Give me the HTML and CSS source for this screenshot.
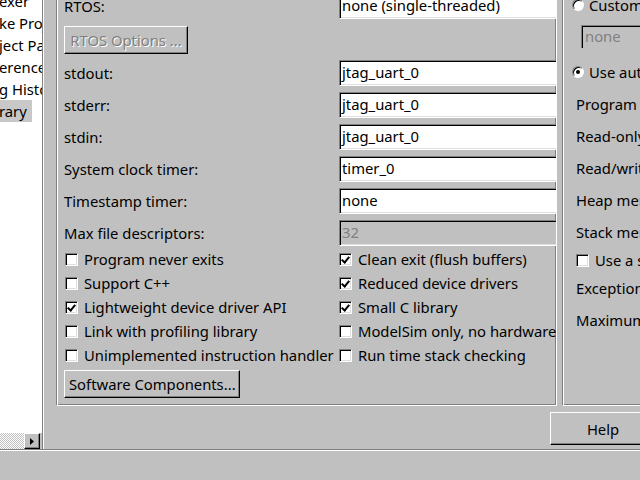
FILE: index.html
```html
<html><head>
<title>System Library Properties</title>
<link rel="stylesheet" href="styles.css">
</head>
<body>
<div class="window">
  <div class="workspace">
    <div class="tree">
      <ul class="tree-list">
        <li>exer</li>
        <li>ke Project</li>
        <li>ject Paths</li>
        <li>erences</li>
        <li>g History</li>
        <li class="selected">rary</li>
      </ul>
      <div class="hscroll">
        <div class="track"></div>
        <div class="arrow-btn">
          <svg width="4" height="7" viewBox="0 0 4 7"><path d="M0 0 L4 3.5 L0 7 Z" fill="#000"/></svg>
        </div>
      </div>
    </div>

    <div class="pages">
      <div class="panels">
        <div class="panel main">
          <div class="form">
            <label>RTOS:</label>
            <div class="field">none (single-threaded)</div>

            <button class="btn options" disabled>RTOS Options ...</button>
            <div></div>

            <label>stdout:</label>
            <div class="field">jtag_uart_0</div>

            <label>stderr:</label>
            <div class="field">jtag_uart_0</div>

            <label>stdin:</label>
            <div class="field">jtag_uart_0</div>

            <label>System clock timer:</label>
            <div class="field">timer_0</div>

            <label>Timestamp timer:</label>
            <div class="field">none</div>

            <label>Max file descriptors:</label>
            <div class="field disabled">32</div>
          </div>

          <div class="checks">
            <div class="check"><span class="box"></span>Program never exits</div>
            <div class="check"><span class="box checked"></span>Clean exit (flush buffers)</div>
            <div class="check"><span class="box"></span>Support C++</div>
            <div class="check"><span class="box checked"></span>Reduced device drivers</div>
            <div class="check"><span class="box checked"></span>Lightweight device driver API</div>
            <div class="check"><span class="box checked"></span>Small C library</div>
            <div class="check"><span class="box"></span>Link with profiling library</div>
            <div class="check"><span class="box"></span>ModelSim only, no hardware support</div>
            <div class="check"><span class="box"></span>Unimplemented instruction handler</div>
            <div class="check"><span class="box"></span>Run time stack checking</div>
          </div>

          <button class="btn components">Software Components...</button>
        </div>

        <div class="panel side">
          <div class="row"><span class="radio"></span>Custom linker script</div>
          <div class="combo-disabled">none</div>
          <div class="row"><span class="radio on"></span>Use auto-generated linker script</div>
          <div class="row label">Program memory (.text):</div>
          <div class="row label">Read-only data memory (.rodata):</div>
          <div class="row label">Read/write data memory (.rwdata):</div>
          <div class="row label">Heap memory:</div>
          <div class="row label">Stack memory:</div>
          <div class="row small"><span class="box"></span>Use a separate exception stack</div>
          <div class="row label">Exception stack memory:</div>
          <div class="row label">Maximum exception stack size:</div>
        </div>
      </div>

      <div class="buttons">
        <button class="btn help">Help</button>
      </div>
    </div>
  </div>
  <div class="status"></div>
</div>
</body></html>
```

FILE: styles.css
```css
body {
  margin: 0;
  padding: 0;
  width: 640px;
  height: 480px;
  overflow: hidden;
  background-color: #c0c0c0;
  font-family: "Noto Sans", Arial, sans-serif;
  font-size: 14.8px;
  color: #000;
}

.window {
  margin-top: -30px;
}

.workspace {
  display: flex;
  height: 479px;
  border-bottom: 1px solid #808080;
}

/* left tree */
.tree {
  flex: none;
  width: 42px;
  display: flex;
  flex-direction: column;
  border-right: 1px solid #808080;
  box-shadow: 1px 0 0 #fff;
}

.tree-list {
  flex: 1;
  margin: 0;
  padding: 20px 0 0 0;
  list-style: none;
  background-color: #fff;
  overflow: hidden;
}

.tree-list li {
  height: 22px;
  line-height: 22px;
  white-space: nowrap;
  text-indent: -1px;
}

.tree-list li.selected {
  width: 32px;
  background-color: #c8c8c8;
}

.hscroll {
  display: flex;
  height: 16px;
}

.hscroll .track {
  width: 24px;
  background: repeating-conic-gradient(#c0c0c0 0 25%, #fff 0 50%) 0 0 / 2px 2px;
}

.arrow-btn {
  width: 14px;
  height: 14px;
  display: flex;
  align-items: center;
  justify-content: center;
  background-color: #c0c0c0;
  border: 1px solid;
  border-color: #fff #000 #000 #fff;
  box-shadow: inset -1px -1px 0 #808080;
}

/* right side */
.pages {
  flex: none;
  width: 640px;
  margin-left: 13px;
  display: flex;
  flex-direction: column;
}

.panels {
  display: flex;
  gap: 5px;
  height: 436px;
}

.panel {
  flex: none;
  box-sizing: border-box;
  height: 436px;
  border: 1px solid;
  border-color: #808080 #fff #fff #808080;
  box-shadow: inset 1px 1px 0 #fff, inset -1px -1px 0 #808080;
  overflow: hidden;
}

.main {
  width: 501px;
  padding: 22px 0 0 7px;
}

.form {
  display: grid;
  grid-template-columns: 275px 1fr;
  grid-template-rows: 26px 29px repeat(6, 26px);
  row-gap: 6px;
  align-items: center;
}

.field {
  box-sizing: border-box;
  height: 26px;
  line-height: 23px;
  padding-left: 2px;
  background-color: #fff;
  border-top: 1px solid #808080;
  border-left: 1px solid #808080;
  border-bottom: 1px solid #fff;
  box-shadow: inset 1px 1px 0 #000, inset 0 -1px 0 #dfdfdf;
  white-space: nowrap;
  margin-right: -2px;
}

.field.disabled {
  background-color: #c0c0c0;
  color: #808080;
}

.btn {
  font-family: inherit;
  font-size: 14.8px;
  color: #000;
  background-color: #c0c0c0;
  border: 1px solid;
  border-color: #fff #000 #000 #fff;
  box-shadow: inset -1px -1px 0 #808080;
  padding: 0 4px;
  text-align: center;
  white-space: nowrap;
}

.btn:disabled {
  color: #808080;
  text-shadow: 1px 1px 0 #fff;
}

.options {
  align-self: end;
  width: 124px;
  height: 28px;
}

.checks {
  display: grid;
  grid-template-columns: 274px 1fr;
  grid-auto-rows: 24px;
  margin: 1px 0 0 1px;
}

.check {
  display: flex;
  align-items: center;
  gap: 6px;
  white-space: nowrap;
}

.box {
  flex: none;
  box-sizing: border-box;
  width: 13px;
  height: 13px;
  background-color: #fff;
  border: 1px solid;
  border-color: #808080 #fff #fff #808080;
  box-shadow: inset 1px 1px 0 #000, inset -1px -1px 0 #dfdfdf;
  position: relative;
}

.box.checked::after {
  content: "";
  position: absolute;
  left: 3px;
  top: 1px;
  width: 3px;
  height: 6px;
  border: solid #000;
  border-width: 0 2px 2px 0;
  transform: rotate(40deg);
}

.components {
  margin-top: 3px;
  width: 176px;
  height: 28px;
}

.side {
  width: 120px;
  padding: 18px 0 0 13px;
}

.side .row {
  display: flex;
  align-items: center;
  height: 32px;
  white-space: nowrap;
}

.side .row.small {
  height: 24px;
  gap: 6px;
}

.radio {
  flex: none;
  box-sizing: border-box;
  width: 12px;
  height: 12px;
  margin: 0 5px 0 -4px;
  border-radius: 50%;
  background-color: #fff;
  border: 1px solid;
  border-color: #808080 #fff #fff #808080;
  box-shadow: inset 1px 1px 0 #000;
  display: flex;
  align-items: center;
  justify-content: center;
}

.radio.on::after {
  content: "";
  width: 4px;
  height: 4px;
  border-radius: 50%;
  background-color: #000;
}

.combo-disabled {
  box-sizing: border-box;
  height: 23px;
  line-height: 21px;
  margin: 4px 0 8px 5px;
  padding-left: 3px;
  color: #808080;
  border-top: 1px solid #808080;
  border-left: 1px solid #808080;
  box-shadow: inset 1px 1px 0 #000;
}

.buttons {
  display: flex;
  padding: 6px 0 0 494px;
}

.help {
  width: 106px;
  height: 33px;
}

.status {
  height: 30px;
  border-top: 1px solid #fff;
}
```
